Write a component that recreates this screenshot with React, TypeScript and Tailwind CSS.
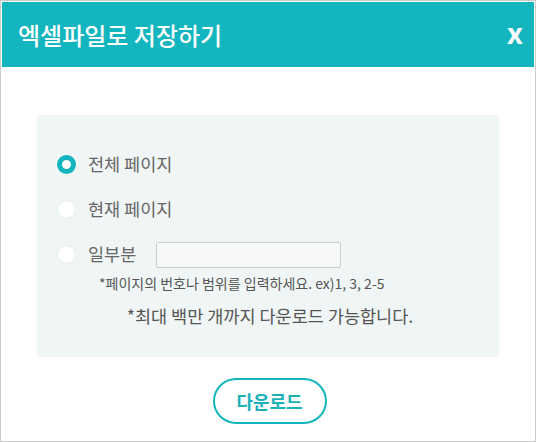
// Excel export dialog: page-range radios, a hint, and the download button.

import { useState } from 'react'

const FONT = { fontFamily: '"Noto Sans CJK KR", "Noto Sans", sans-serif' }

type Scope = 'all' | 'current' | 'part'

const OPTIONS: { id: Scope; label: string }[] = [
  { id: 'all', label: '전체 페이지' },
  { id: 'current', label: '현재 페이지' },
  { id: 'part', label: '일부분' },
]

export default function App() {
  const [scope, setScope] = useState<Scope>('all')

  return (
    <div
      style={FONT}
      className="flex h-[442px] w-[536px] flex-col border border-[#cccccc] bg-white px-px pt-px"
    >
      <header className="flex h-[65px] shrink-0 items-center justify-between bg-[#13b5be] pl-[16px] pr-[11px]">
        <h1 className="text-[24px] font-medium leading-none text-white">엑셀파일로 저장하기</h1>
        <button className="pb-[6px] text-[29px] font-bold leading-none text-white">x</button>
      </header>

      <section className="mx-[35px] mt-[48px] flex h-[242px] flex-col bg-[#f0f5f5] pl-[20px] pt-[27px]">
        {OPTIONS.map((opt) => (
          <div key={opt.id} className="flex h-[45px] items-center">
            <Radio checked={scope === opt.id} onClick={() => setScope(opt.id)} />
            <span className="ml-[12px] text-[17.5px] text-[#666666]">{opt.label}</span>
            {opt.id === 'part' && (
              <input className="ml-[20px] h-[26px] w-[185px] rounded-[2px] border border-[#cccccc] bg-[#f7f9f9]" />
            )}
          </div>
        ))}
        <p className="-mt-[1px] pl-[42px] text-[14px] leading-none text-[#555555]">
          *페이지의 번호나 범위를 입력하세요. ex)1, 3, 2-5
        </p>
        <p className="mt-[17px] pr-[16px] text-center text-[17.5px] leading-none text-[#555555]">
          *최대 백만 개까지 다운로드 가능합니다.
        </p>
      </section>

      <div className="flex justify-center pl-[3px] pt-[21px]">
        <button className="h-[46px] w-[114px] rounded-full border-2 border-[#13b5be] text-[18px] font-bold text-[#19b0b8]">
          다운로드
        </button>
      </div>
    </div>
  )
}

function Radio({ checked, onClick }: { checked: boolean; onClick: () => void }) {
  return (
    <button
      onClick={onClick}
      className={
        checked
          ? 'h-[19px] w-[19px] shrink-0 rounded-full border-[5px] border-[#13b5be] bg-white'
          : 'h-[19px] w-[19px] shrink-0 rounded-full border border-[#e8eded] bg-white'
      }
    />
  )
}
